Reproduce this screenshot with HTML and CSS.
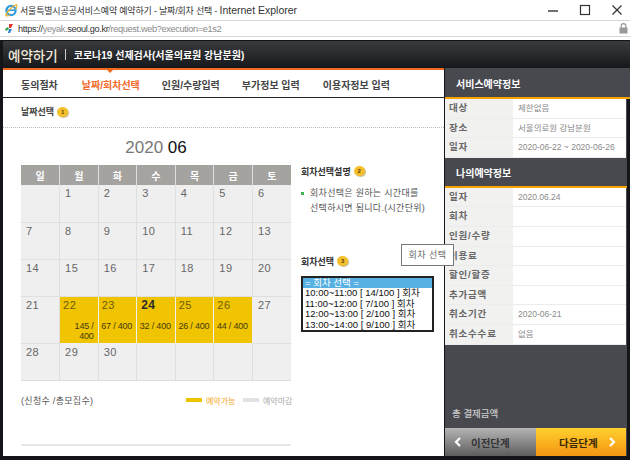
FILE: index.html
```html
<!DOCTYPE html>
<html lang="ko">
    <head>
        <meta charset="utf-8">
        <title>날짜/회차 선택</title>
        <link rel="stylesheet" href="styles.css">
    </head>
    <body>
        <div class="titlebar">
            <svg class="ie-logo" width="14" height="14" viewBox="0 0 14 14">
                <circle cx="7" cy="7.5" r="4.6" fill="none" stroke="#2f9be0" stroke-width="2.2"/>
                <path d="M3.5 7.2h7.6" stroke="#2f9be0" stroke-width="1.6"/>
                <path d="M1.5 12.5C3 9 8 3 12.5 1.5M12.5 1.5C13.5 3 12.5 5 11.5 6.5M1.5 12.5C3 13.500 5 12.500 6 12" fill="none" stroke="#f0b429" stroke-width="1.2"/>
            </svg>
            <span class="title-text">서울특별시공공서비스예약 예약하기 - 날짜/회차 선택 - <span class="title-app">Internet Explorer</span></span>
            <div class="win-btns">
                <svg width="12" height="12" viewBox="0 0 12 12"><path d="M1 7h10" stroke="#333" stroke-width="1.4"/></svg>
                <svg width="12" height="12" viewBox="0 0 12 12"><rect x="1.500" y="1.500" width="9" height="9" fill="none" stroke="#333" stroke-width="1.2"/></svg>
                <svg width="12" height="12" viewBox="0 0 12 12"><path d="M1.500 1.500l9 9M10.500 1.500l-9 9" stroke="#333" stroke-width="1.200"/></svg>
            </div>
        </div>
        <div class="addressbar">
            <svg width="11" height="11" viewBox="0 0 11 11">
                <path d="M1 6l3-2 1 2-3 2z" fill="#2aa84a"/>
                <path d="M5 1h4L7 5H5z" fill="#e0392b"/>
                <path d="M5 6h3L6 10H4z" fill="#2f7fd0"/>
            </svg>
            <span class="url">https://<i>yeyak.</i>seoul.go.kr<i>/request.web?execution=e1s2</i></span>
            <svg class="lock" width="9" height="11" viewBox="0 0 9 11">
                <rect x="0.500" y="4.500" width="8" height="6" fill="#999"/>
                <path d="M2.200 5V3a2.300 2.300 0 0 1 4.600 0v2" fill="none" stroke="#999" stroke-width="1.200"/>
            </svg>
        </div>

        <div class="window">
            <div class="topbar">
                <b class="brand">예약하기</b>
                <span class="topbar-sep"></span>
                <b class="service-name">코로나19 선제검사(서울의료원 강남분원)</b>
            </div>
            <div class="columns">
                <div class="main">
                    <ul class="steps">
                        <li>동의절차</li>
                        <li class="active">날짜/회차선택</li>
                        <li>인원/수량입력</li>
                        <li>부가정보 입력</li>
                        <li>이용자정보 입력</li>
                    </ul>
                    <div class="section-head">
                        <b>날짜선택</b>
                        <span class="badge">1</span>
                    </div>
                    <div class="content">
                        <div class="cal-col">
                            <div class="cal-title">2020 <span>06</span></div>
                            <table class="cal">
                                <tr>
                                    <th>일</th><th>월</th><th>화</th><th>수</th><th>목</th><th>금</th><th>토</th>
                                </tr>
                                <tr>
                                    <td></td><td>1</td><td>2</td><td>3</td><td>4</td><td>5</td><td>6</td>
                                </tr>
                                <tr>
                                    <td>7</td><td>8</td><td>9</td><td>10</td><td>11</td><td>12</td><td>13</td>
                                </tr>
                                <tr>
                                    <td>14</td><td>15</td><td>16</td><td>17</td><td>18</td><td>19</td><td>20</td>
                                </tr>
                                <tr class="week-open">
                                    <td>21</td>
                                    <td class="open">22<p>145 / 400</p></td>
                                    <td class="open">23<p>67 / 400</p></td>
                                    <td class="open today">24<p>32 / 400</p></td>
                                    <td class="open">25<p>26 / 400</p></td>
                                    <td class="open">26<p>44 / 400</p></td>
                                    <td>27</td>
                                </tr>
                                <tr>
                                    <td>28</td><td>29</td><td>30</td><td></td><td></td><td></td><td></td>
                                </tr>
                            </table>
                            <div class="legend">
                                <span class="legend-note">(신청수 /총모집수)</span>
                                <span class="legend-bar bar-open"></span>
                                <span class="legend-open">예약가능</span>
                                <span class="legend-bar bar-closed"></span>
                                <span class="legend-closed">예약마감</span>
                            </div>
                            <div class="cal-foot"></div>
                        </div>
                        <div class="side-col">
                            <div class="sub-head">
                                <b>회차선택설명</b>
                                <span class="badge">2</span>
                            </div>
                            <p class="desc">회차선택은 원하는 시간대를<br>선택하시면 됩니다.(시간단위)</p>
                            <div class="sub-head sub-head-select">
                                <b>회차선택</b>
                                <span class="badge">3</span>
                            </div>
                            <div class="rounds">
                                <div class="round-first">= 회차 선택 =</div>
                                <div>10:00~11:00 [ 14/100 ] 회차</div>
                                <div>11:00~12:00 [ 7/100 ] 회차</div>
                                <div>12:00~13:00 [ 2/100 ] 회차</div>
                                <div>13:00~14:00 [ 9/100 ] 회차</div>
                            </div>
                        </div>
                    </div>
                </div>

                <div class="sidebar">
                    <h3 class="first">서비스예약정보</h3>
                    <dl class="info">
                        <div><dt>대상</dt><dd>제한없음</dd></div>
                        <div><dt>장소</dt><dd>서울의료원 강남분원</dd></div>
                        <div><dt>일자</dt><dd>2020-06-22 ~ 2020-06-26</dd></div>
                    </dl>
                    <h3 class="second">나의예약정보</h3>
                    <dl class="info">
                        <div><dt>일자</dt><dd>2020.06.24</dd></div>
                        <div><dt>회차</dt><dd></dd></div>
                        <div><dt>인원/수량</dt><dd></dd></div>
                        <div><dt>이용료</dt><dd></dd></div>
                        <div><dt>할인/할증</dt><dd></dd></div>
                        <div><dt>추가금액</dt><dd></dd></div>
                        <div><dt>취소기간</dt><dd>2020-06-21</dd></div>
                        <div><dt>취소수수료</dt><dd>없음</dd></div>
                    </dl>
                    <div class="total">총 결제금액</div>
                    <div class="nav-btns">
                        <div class="btn-prev">
                            <svg width="8" height="10" viewBox="0 0 8 10"><path d="M6 1L2 5l4 4" fill="none" stroke="#fff" stroke-width="2.200"/></svg>
                            <b>이전단계</b>
                        </div>
                        <div class="btn-next">
                            <b>다음단계</b>
                            <svg width="8" height="10" viewBox="0 0 8 10"><path d="M2 1l4 4-4 4" fill="none" stroke="#fff" stroke-width="2.200"/></svg>
                        </div>
                    </div>
                </div>
            </div>
        </div>

        <div class="tooltip">회차 선택</div>
    </body>
</html>
```

FILE: styles.css
```css
*{
    box-sizing: border-box;
}
html, body{
    margin: 0;
    padding: 0;
    width: 630px;
    height: 460px;
    overflow: hidden;
    background: #fff;
    font-family: "Liberation Sans", "Noto Sans CJK KR", sans-serif;
    position: relative;
}

/* browser chrome */
.titlebar{
    height: 20px;
    display: flex;
    align-items: center;
    padding-left: 4px;
    background: #fff;
}
.title-text{
    margin-left: 2px;
    font-size: 9px;
    letter-spacing: -0.2px;
    color: #333;
    white-space: nowrap;
}
.title-app{
    font-size: 10.500px;
    letter-spacing: 0;
}
.win-btns{
    margin-left: auto;
    display: flex;
    gap: 20px;
    padding-right: 7px;
}
.addressbar{
    height: 17px;
    display: flex;
    align-items: center;
    padding: 0 2px 0 4px;
    border-top: 1px solid #d6d6d6;
    border-bottom: 1px solid #d6d6d6;
}
.url{
    margin-left: 3px;
    font-size: 9.200px;
    letter-spacing: -0.35px;
    color: #333;
}
.url i{
    font-style: normal;
    color: #8a8a8a;
}
.lock{
    margin-left: auto;
}

/* window */
.window{
    margin-top: 3px;
    height: 420px;
    background: #141518;
    padding: 1px 0 4px 3px;
    display: flex;
    flex-direction: column;
}
.topbar{
    height: 27px;
    flex: none;
    display: flex;
    align-items: center;
    padding-left: 5px;
    background: linear-gradient(#3a3b3f, #17181b);
    color: #fff;
}
.brand{
    font-size: 13.500px;
    font-weight: 500;
    color: #f0e8d8;
}
.topbar-sep{
    width: 1px;
    height: 11px;
    margin: 0 8px 0 7px;
    background: #ccc;
}
.service-name{
    font-size: 10px;
}
.columns{
    flex: 1;
    display: flex;
}

/* left part */
.main{
    width: 441px;
    background: #fff;
    border-top: 2px solid #f26a1d;
}
.steps{
    list-style: none;
    margin: 0;
    height: 28px;
    padding: 1px 0 0;
    display: flex;
    align-items: center;
    border-bottom: 1px solid #222;
    font-size: 10px;
    font-weight: 700;
    color: #444;
}
.steps li{
    white-space: nowrap;
    position: relative;
}
.steps li:nth-child(1){
    margin-left: 18px;
}
.steps li:nth-child(2){
    margin-left: 24px;
}
.steps li:nth-child(3){
    margin-left: 22px;
}
.steps li:nth-child(4){
    margin-left: 22px;
}
.steps li:nth-child(5){
    margin-left: 23px;
}
.steps .active{
    color: #f2692a;
}
.steps .active::before{
    content: "";
    position: absolute;
    left: 24px;
    top: -8px;
    border: 4px solid transparent;
    border-top-color: #f26a1d;
    border-bottom: 0;
}
.section-head{
    height: 30px;
    display: flex;
    align-items: center;
    padding: 0 0 2px 18px;
    gap: 3px;
    border-bottom: 1px dotted #bbb;
    font-size: 9px;
    color: #444;
}
.badge{
    width: 11px;
    height: 10px;
    border-radius: 50%;
    background: #f5c02c;
    box-shadow: 1px 1px 1px #c9b98a;
    color: #5b4300;
    font-size: 6px;
    font-weight: 700;
    line-height: 10px;
    text-align: center;
}
.content{
    display: flex;
    padding-left: 18px;
}
.cal-col{
    width: 270px;
}
.cal-title{
    height: 37px;
    padding-top: 10px;
    font-size: 17px;
    line-height: 20px;
    text-align: center;
    color: #777;
}
.cal-title span{
    color: #111;
}
.cal{
    width: 270px;
    table-layout: fixed;
    border-collapse: collapse;
}
.cal th{
    height: 20px;
    padding: 0;
    background: #a5a3a0;
    border-left: 1px solid #ddd;
    color: #fff;
    font-size: 10px;
}
.cal th:first-child{
    border-left: 0;
}
.cal td{
    height: 37px;
    padding: 1px 0 0 5px;
    vertical-align: top;
    background: #f0eff0;
    border: 1px solid #e0dfdf;
    border-top: 0;
    color: #666;
    font-size: 11px;
    line-height: 14px;
    letter-spacing: 0.5px;
}
.cal td:first-child{
    border-left: 0;
}
.cal td:last-child{
    border-right: 0;
}
.week-open td{
    height: 47px;
}
.cal td.open{
    padding-left: 3px;
    background: #f0c400;
    color: #6d5a10;
    border: 1px solid #f0eff0;
    border-top: 0;
}
.cal td.today{
    padding-left: 4px;
    color: #2b2b2b;
    font-weight: 700;
    font-size: 12px;
}
.cal p{
    margin: 9px 0 0 -3px;
    padding-right: 4px;
    text-align: right;
    font-size: 9px;
    font-weight: 400;
    line-height: 10px;
    letter-spacing: -0.2px;
    color: #453a0c;
}
.legend{
    margin-top: 13px;
    display: flex;
    align-items: center;
    font-size: 8px;
    color: #aaa;
    white-space: nowrap;
}
.legend-note{
    width: 165px;
    flex: none;
    font-size: 9px;
    letter-spacing: 0.3px;
    color: #555;
}
.legend-bar{
    width: 16px;
    height: 4px;
    flex: none;
    margin-right: 4px;
}
.bar-open{
    background: #f0c300;
}
.bar-closed{
    background: #e2e2e2;
}
.legend-open{
    width: 37px;
    flex: none;
    color: #f7a823;
}
.cal-foot{
    margin-top: 37px;
    height: 2px;
    background: #e5e5e5;
}
.side-col{
    margin-left: 10px;
    padding-top: 36px;
}
.sub-head{
    display: flex;
    align-items: center;
    gap: 3px;
    height: 14px;
    font-size: 9px;
    color: #333;
}
.desc{
    margin: 8px 0 0;
    padding-left: 9px;
    position: relative;
    font-size: 9px;
    line-height: 15px;
    color: #555;
    letter-spacing: 0.3px;
    white-space: nowrap;
}
.desc::before{
    content: "";
    position: absolute;
    left: 0;
    top: 6px;
    width: 3px;
    height: 3px;
    background: #3db54a;
}
.sub-head-select{
    margin-top: 38px;
}
.rounds{
    margin-top: 8px;
    width: 133px;
    height: 56px;
    border: 2px solid #222;
    font-size: 9.500px;
    line-height: 10.400px;
    color: #111;
    white-space: nowrap;
}
.rounds div{
    padding-left: 2px;
}
.rounds .round-first{
    background: #56b0e2;
    color: #fff;
}

/* right part */
.sidebar{
    width: 182px;
    margin-left: 1px;
    display: flex;
    flex-direction: column;
    background: #47494f;
}
.sidebar h3{
    margin: 0;
    height: 30px;
    padding-left: 11px;
    font-size: 10px;
    line-height: 32px;
    color: #fff;
    border-bottom: 2px solid #f5a400;
}
.sidebar h3.first{
    height: 31px;
    margin-right: -3px;
    background: #47494f;
    line-height: 33px;
    border-bottom: 0;
    box-shadow: inset 0 -2px 0 #f5a400;
}
.info{
    margin: 0;
    width: 181px;
    background: #fff;
}
.info div{
    display: flex;
    height: 19.600px;
    border-bottom: 1px solid #ececec;
}
.info dt{
    width: 68px;
    padding-left: 4px;
    background: #f1f1f0;
    font-size: 9.500px;
    font-weight: 700;
    line-height: 18px;
    letter-spacing: 0.8px;
    color: #666;
    white-space: nowrap;
}
.info dd{
    margin: 0;
    padding-left: 5px;
    font-size: 8.500px;
    line-height: 18px;
    color: #8a8a8a;
    white-space: nowrap;
}
.total{
    margin-top: auto;
    padding: 0 0 8px 7px;
    font-size: 9.500px;
    font-weight: 500;
    color: #ccc;
}
.nav-btns{
    display: flex;
    width: 181px;
    height: 28px;
    font-size: 10.500px;
}
.btn-prev, .btn-next{
    display: flex;
    align-items: center;
}
.btn-prev{
    width: 91px;
    padding-left: 9px;
    gap: 9px;
    background: linear-gradient(#b5b5b5, #5d5d5d);
    color: #333;
}
.btn-next{
    width: 90px;
    padding-left: 23px;
    gap: 10px;
    background: linear-gradient(#ffd02e, #f59512);
    color: #3a2b08;
}

/* floating tooltip over the sidebar */
.tooltip{
    position: absolute;
    left: 401px;
    top: 244px;
    width: 53px;
    height: 22px;
    background: #fff;
    border: 1px solid #777;
    font-size: 9px;
    line-height: 20px;
    letter-spacing: 0.5px;
    text-align: center;
    color: #666;
}
```
